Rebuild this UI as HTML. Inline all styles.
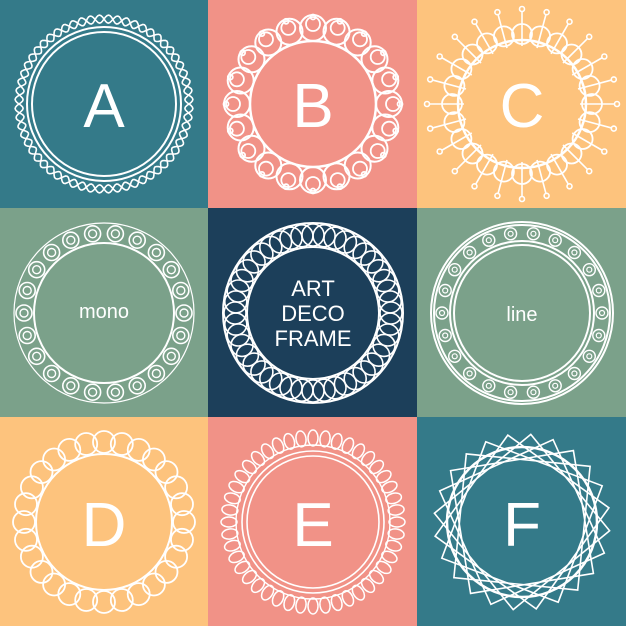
<!DOCTYPE html><html><head><style>
body{margin:0;width:626px;height:626px;overflow:hidden}
svg{display:block}
text{font-family:"Liberation Sans",sans-serif;fill:#fff}
</style></head><body>
<svg id="s" width="626" height="626" viewBox="0 0 626 626" xmlns="http://www.w3.org/2000/svg">
<rect x="0" y="0" width="208" height="208" fill="#347a89"/>
<rect x="208" y="0" width="209" height="208" fill="#f19287"/>
<rect x="417" y="0" width="209" height="208" fill="#fdc37d"/>
<rect x="0" y="208" width="208" height="209" fill="#7ba18a"/>
<rect x="208" y="208" width="209" height="209" fill="#1c3f5a"/>
<rect x="417" y="208" width="209" height="209" fill="#7ba18a"/>
<rect x="0" y="417" width="208" height="209" fill="#fdc37d"/>
<rect x="208" y="417" width="209" height="209" fill="#f19287"/>
<rect x="417" y="417" width="209" height="209" fill="#347a89"/>
<g id="g" fill="none" stroke="#fff" stroke-width="2"></g>
<text x="104" y="127" font-size="62" text-anchor="middle">A</text>
<text x="313" y="127" font-size="62" text-anchor="middle">B</text>
<text x="522" y="127" font-size="62" text-anchor="middle">C</text>
<text x="104" y="318" font-size="20" text-anchor="middle">mono</text>
<text x="522" y="321" font-size="20" text-anchor="middle">line</text>
<text x="313" y="296" font-size="22" text-anchor="middle">ART</text>
<text x="313" y="321" font-size="22" text-anchor="middle">DECO</text>
<text x="313" y="346" font-size="22" text-anchor="middle">FRAME</text>
<text x="104" y="546" font-size="62" text-anchor="middle">D</text>
<text x="313" y="546" font-size="62" text-anchor="middle">E</text>
<text x="522" y="546" font-size="62" text-anchor="middle">F</text>
</svg>
<script>
var g=document.getElementById('g'),h='';
function C(x,y,r,w){h+='<circle cx="'+x.toFixed(1)+'" cy="'+y.toFixed(1)+'" r="'+r+'"'+(w?' stroke-width="'+w+'"':'')+'/>';}
function P(d,w){h+='<path d="'+d+'"'+(w?' stroke-width="'+w+'"':'')+'/>';}
function pt(cx,cy,r,a){return [cx+r*Math.cos(a),cy+r*Math.sin(a)];}
var T=Math.PI*2,i,k;
C(104,104,72);C(104,104,77);
for(k=0;k<2;k++){var d='';for(i=0;i<=360;i++){var a=i/360*T,r=85+4*Math.sin(a*30+k*Math.PI);var p=pt(104,104,r,a);d+=(i?'L':'M')+p[0].toFixed(1)+' '+p[1].toFixed(1);}P(d,1.6);}
C(313,104,63,2.5);
for(i=0;i<20;i++){var a=i/20*T;var p=pt(313,104,76,a);C(p[0],p[1],13,2);var q=pt(313,104,87,a);C(q[0],q[1],2.5,1.8);var m=pt(313,104,80,a);C(m[0],m[1],7,1.8);}
C(522,104,64,2.5);
for(i=0;i<24;i++){var a=i/24*T;var p=pt(522,104,70,a);C(p[0],p[1],10,1.8);var s=pt(522,104,58,a),e=pt(522,104,92,a);P('M'+s[0].toFixed(1)+' '+s[1].toFixed(1)+'L'+e[0].toFixed(1)+' '+e[1].toFixed(1),1.6);var q=pt(522,104,95,a);C(q[0],q[1],2.5,1.6);}
C(104,313,70);
for(i=0;i<22;i++){var a=i/22*T;var p=pt(104,313,80,a);C(p[0],p[1],8,1.6);C(p[0],p[1],4,1.4);}
C(104,313,90,1.2);
C(313,313,66,2);C(313,313,90,2);
for(i=0;i<44;i++){var a=i/44*T;var p=pt(313,313,78,a);C(p[0],p[1],11,1.6);}
C(522,313,68);C(522,313,72);C(522,313,88);C(522,313,91);
for(i=0;i<22;i++){var a=i/22*T;var p=pt(522,313,80,a);C(p[0],p[1],6,1.4);C(p[0],p[1],2.5,1.2);}
C(104,522,68);
for(i=0;i<28;i++){var a=i/28*T;var p=pt(104,522,80,a);C(p[0],p[1],11,1.8);}
C(313,522,66,1.6);C(313,522,71,1.6);C(313,522,77,1.4);
for(i=0;i<44;i++){var a=i/44*T;var p=pt(313,522,84,a);var deg=a*180/Math.PI;h+='<ellipse cx="'+p[0].toFixed(1)+'" cy="'+p[1].toFixed(1)+'" rx="8" ry="5" transform="rotate('+deg.toFixed(1)+' '+p[0].toFixed(1)+' '+p[1].toFixed(1)+')" stroke-width="1.5"/>';}
C(522,522,75,2.5);
for(k=0;k<6;k++){var d='';for(i=0;i<4;i++){var p=pt(522,522,88,i/4*T+k*T/24+0.1);d+=(i?'L':'M')+p[0].toFixed(1)+' '+p[1].toFixed(1);}P(d+'Z',1.6);}
g.innerHTML=h;
</script>
</body></html>
